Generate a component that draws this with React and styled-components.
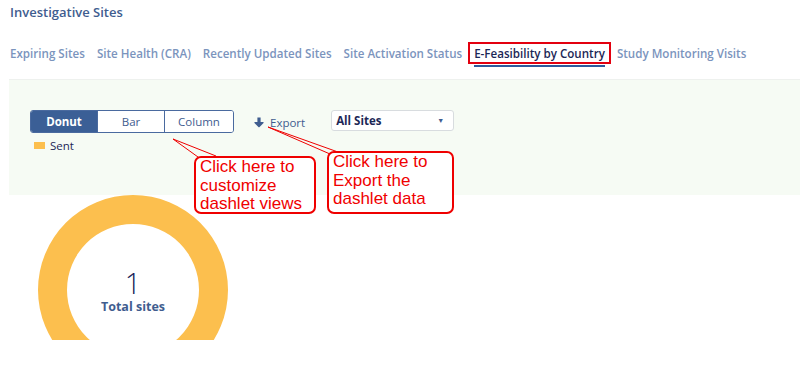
import React from "react";
import styled, { createGlobalStyle } from "styled-components";

const GlobalStyle = createGlobalStyle`
  body {
    margin: 0;
    background: #ffffff;
    font-family: "Open Sans", "Noto Sans", sans-serif;
  }
`;

const Page = styled.div`
  position: relative;
  width: 800px;
  height: 373px;
  overflow: hidden;
`;

const Title = styled.h1`
  margin: 0;
  padding: 3px 0 0 10px;
  font-size: 13px;
  font-weight: 600;
  color: #3f5d8f;
  line-height: 18px;
`;

const Tabs = styled.div`
  display: flex;
  margin-top: 21px;
  padding-left: 4px;
`;

const Tab = styled.div`
  position: relative;
  padding: 0 4px;
  height: 22px;
  line-height: 19px;
  font-size: 11.6px;
  font-weight: 600;
  color: ${(p) => (p.$active ? "#1c2756" : "#7b94bd")};
  border: 2px solid ${(p) => (p.$active ? "#e3000f" : "transparent")};
  box-sizing: border-box;
  white-space: nowrap;

  &::after {
    content: "";
    display: ${(p) => (p.$active ? "block" : "none")};
    position: absolute;
    left: 4px;
    right: 4px;
    bottom: -5px;
    height: 2px;
    background: #2d5a9c;
  }
`;

const Panel = styled.div`
  margin: 15px 0 0 9px;
  height: 116px;
  background: #f6fbf4;
  border-top: 1px solid #eef1ee;
  padding: 30px 0 0 21px;
  box-sizing: border-box;
`;

const Toolbar = styled.div`
  display: flex;
  align-items: center;
`;

const Toggle = styled.div`
  display: flex;
  border: 1px solid #4a6a9f;
  border-radius: 3px;
  overflow: hidden;
  height: 23px;
  box-sizing: border-box;
`;

const ToggleButton = styled.div`
  width: ${(p) => p.$w}px;
  display: flex;
  align-items: center;
  justify-content: center;
  font-size: 11.5px;
  font-weight: ${(p) => (p.$active ? 700 : 400)};
  color: ${(p) => (p.$active ? "#ffffff" : "#3f5d8f")};
  background: ${(p) => (p.$active ? "#3b5f96" : "#ffffff")};
  border-left: ${(p) => (p.$first ? "none" : "1px solid #4a6a9f")};
`;

const ExportLink = styled.div`
  display: flex;
  align-items: center;
  gap: 6px;
  margin-left: 20px;
  margin-top: 1px;
  font-size: 11.5px;
  color: #3f5d8f;
`;

const Select = styled.div`
  margin-left: 26px;
  width: 123px;
  height: 21px;
  box-sizing: border-box;
  border: 1px solid #d8dcdf;
  border-radius: 3px;
  background: #ffffff;
  display: flex;
  align-items: center;
  justify-content: space-between;
  padding: 0 9px 0 4px;
  font-size: 11.5px;
  font-weight: 700;
  color: #1c2756;
  margin-top: -2px;
`;

const Caret = styled.span`
  font-size: 7px;
  color: #3f5d8f;
`;

const Legend = styled.div`
  display: flex;
  align-items: center;
  gap: 5px;
  margin: 5px 0 0 4px;
  font-size: 11.5px;
  color: #1c2756;
`;

const Swatch = styled.span`
  width: 11px;
  height: 7px;
  background: #fcbf4e;
`;

const ChartArea = styled.div`
  position: relative;
  width: 266px;
  height: 145px;
`;

const ChartLabel = styled.div`
  position: absolute;
  left: 0;
  width: 266px;
  top: 71px;
  text-align: center;
`;

const Count = styled.div`
  font-size: 29px;
  font-weight: 300;
  color: #1a1f5a;
  line-height: 33px;
`;

const CountCaption = styled.div`
  font-size: 12.5px;
  font-weight: 700;
  color: #3f5d8f;
  line-height: 16px;
`;

const Callout = styled.div`
  position: absolute;
  left: ${(p) => p.$x}px;
  top: ${(p) => p.$y}px;
  width: ${(p) => p.$w}px;
  height: ${(p) => p.$h}px;
  box-sizing: border-box;
  border: 2px solid #ef0000;
  border-radius: 7px;
  background: #ffffff;
  padding: 0 0 0 4px;
  font-family: "Liberation Sans", Arial, sans-serif;
  font-size: 17px;
  line-height: 18.5px;
  color: #f00000;
`;

const Pointers = styled.svg`
  position: absolute;
  left: 0;
  top: 0;
  pointer-events: none;
`;

export default function App() {
  return (
    <Page>
      <GlobalStyle />
      <Title>Investigative Sites</Title>
      <Tabs>
        <Tab>Expiring Sites</Tab>
        <Tab>Site Health (CRA)</Tab>
        <Tab>Recently Updated Sites</Tab>
        <Tab>Site Activation Status</Tab>
        <Tab $active>E-Feasibility by Country</Tab>
        <Tab>Study Monitoring Visits</Tab>
      </Tabs>
      <Panel>
        <Toolbar>
          <Toggle>
            <ToggleButton $w={66} $active $first>
              Donut
            </ToggleButton>
            <ToggleButton $w={66}>Bar</ToggleButton>
            <ToggleButton $w={68}>Column</ToggleButton>
          </Toggle>
          <ExportLink>
            <svg width="10" height="11" viewBox="0 0 10 11">
              <path
                d="M3.4 0.5h3.2v4.6h2.6a0.5 0.5 0 0 1 0.35 0.85L5.35 10.2a0.5 0.5 0 0 1 -0.7 0L0.45 5.95A0.5 0.5 0 0 1 0.8 5.1h2.6z"
                fill="#3f5d8f"
              />
            </svg>
            Export
          </ExportLink>
          <Select>
            All Sites
            <Caret>▼</Caret>
          </Select>
        </Toolbar>
        <Legend>
          <Swatch />
          Sent
        </Legend>
      </Panel>
      <ChartArea>
        <svg width="266" height="145" viewBox="0 0 266 145">
          <path
            fillRule="evenodd"
            fill="#fcbf4e"
            d="M38 95a95 95 0 1 0 190 0a95 95 0 1 0 -190 0z M67 95a66 66 0 1 0 132 0a66 66 0 1 0 -132 0z"
          />
        </svg>
        <ChartLabel>
          <Count>1</Count>
          <CountCaption>Total sites</CountCaption>
        </ChartLabel>
      </ChartArea>
      <Pointers width="800" height="373">
        <g stroke="#ef0000" strokeWidth="1" fill="none">
          <path d="M173 139 L198 157 M173 139 L216 156" />
          <path d="M268 127 L330 154 M268 127 L338 152" />
        </g>
      </Pointers>
      <Callout $x={194} $y={156} $w={122} $h={58}>
        Click here to
        <br />
        customize
        <br />
        dashlet views
      </Callout>
      <Callout $x={327} $y={151} $w={127} $h={63}>
        Click here to
        <br />
        Export the
        <br />
        dashlet data
      </Callout>
    </Page>
  );
}
